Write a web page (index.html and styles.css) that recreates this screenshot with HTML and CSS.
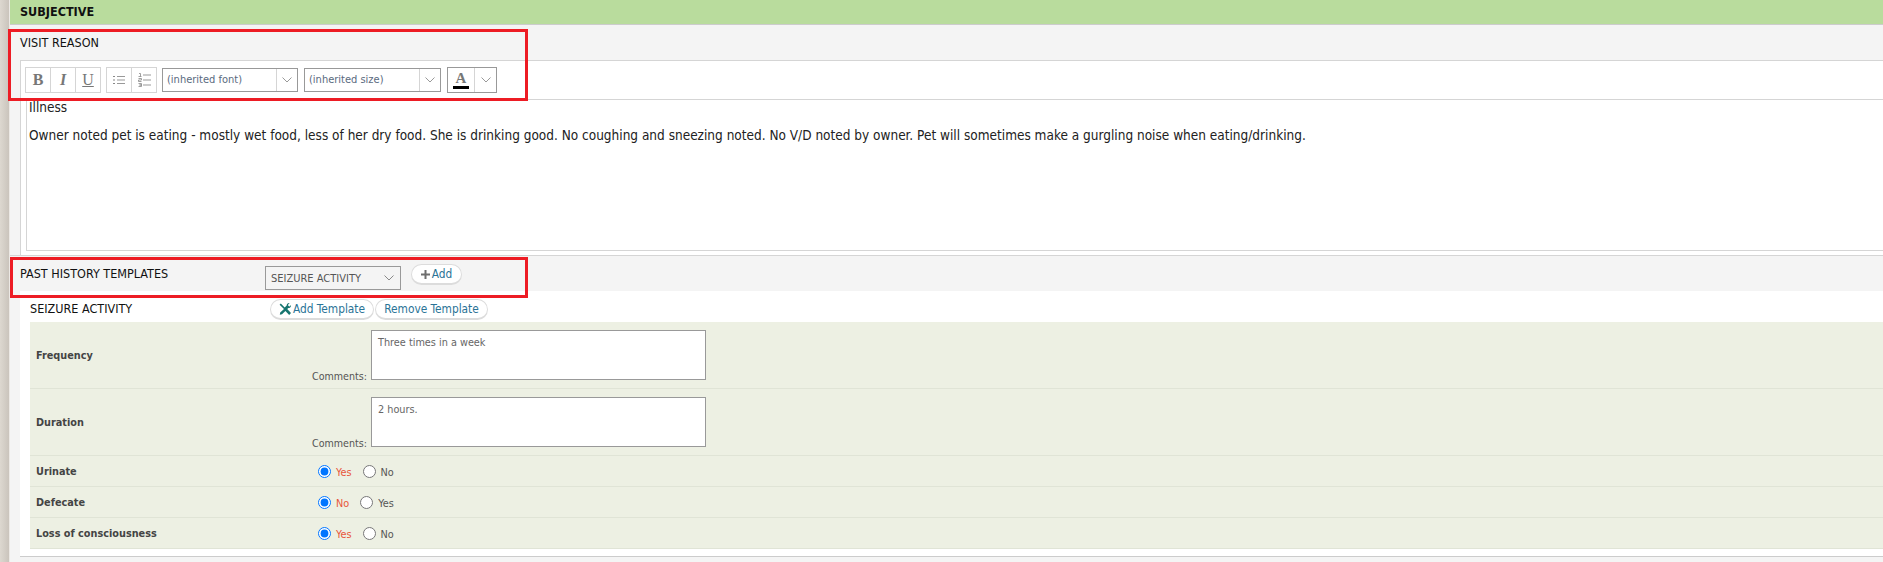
FILE: index.html
```html
<!DOCTYPE html>
<html lang="en">
<head>
<meta charset="utf-8">
<title>Subjective</title>
<link rel="stylesheet" href="styles.css">
</head>
<body>
<div class="page">
  <div class="strip"></div>
  <main class="main">
    <h1 class="section-head">SUBJECTIVE</h1>

    <section class="visit">
      <div class="mark mark-visit"></div>
      <h2 class="visit-title">VISIT REASON</h2>
      <div class="editor">
        <div class="toolbar">
          <div class="btn-group group-format">
            <span class="tool glyph-b">B</span>
            <span class="tool glyph-i">I</span>
            <span class="tool glyph-u">U</span>
          </div>
          <div class="btn-group group-list">
            <span class="tool">
              <svg width="12" height="10" viewBox="0 0 12 10"><path d="M4 1.500h8M4 5h8M4 8.500h8" stroke="#999" fill="none"/><path d="M0 1h2v1H0zM0 4.500h2v1H0zM0 8h2v1H0z" fill="#888"/></svg>
            </span>
            <span class="tool">
              <svg width="13" height="14" viewBox="0 0 13 14"><path d="M5 2h8M5 7h8M5 12h8" stroke="#999" fill="none"/><path d="M1 .5h1.500v3M.5 3.500h3M.5 5.500h3v1.500h-3v1.500h3M.5 10.500h3v1.500h-2 2v1.500h-3" stroke="#888" fill="none" stroke-width=".8"/></svg>
            </span>
          </div>
          <div class="combo combo-font">
            <span class="combo-text">(inherited font)</span>
            <span class="combo-arrow"><svg width="10" height="6" viewBox="0 0 10 6"><path d="M.5.500 5 5 9.500.500" stroke="#999" fill="none"/></svg></span>
          </div>
          <div class="combo combo-size">
            <span class="combo-text">(inherited size)</span>
            <span class="combo-arrow"><svg width="10" height="6" viewBox="0 0 10 6"><path d="M.5.500 5 5 9.500.500" stroke="#999" fill="none"/></svg></span>
          </div>
          <div class="color-picker">
            <span class="color-main"><span class="color-a">A</span><span class="color-bar"></span></span>
            <span class="color-arrow"><svg width="10" height="6" viewBox="0 0 10 6"><path d="M.5.500 5 5 9.500.500" stroke="#999" fill="none"/></svg></span>
          </div>
        </div>
        <div class="editor-body">
          <p class="reason">Illness</p>
          <p class="reason">Owner noted pet is eating - mostly wet food, less of her dry food. She is drinking good. No coughing and sneezing noted. No V/D noted by owner. Pet will sometimes make a gurgling noise when eating/drinking.</p>
        </div>
      </div>
    </section>

    <section class="history">
      <div class="mark mark-history"></div>
      <h2 class="history-title">PAST HISTORY TEMPLATES</h2>
      <div class="history-select">
        <span>SEIZURE ACTIVITY</span>
        <svg width="10" height="6" viewBox="0 0 10 6"><path d="M.5.500 5 5 9.500.500" stroke="#888" fill="none"/></svg>
      </div>
      <span class="pill pill-add">
        <svg width="9" height="9" viewBox="0 0 9 9"><path d="M3.500 0h2v3.500H9v2H5.500V9h-2V5.500H0v-2h3.500z" fill="#6e6e6e"/></svg>
        Add
      </span>
    </section>

    <section class="template">
      <div class="template-head">
        <h3 class="template-title">SEIZURE ACTIVITY</h3>
        <span class="pill pill-template">
          <svg width="12" height="12" viewBox="0 0 12 12"><path d="M.6 1.800 1.800.6l3.900 3.900 2-2c0-1.400 1-2.400 2.400-2.400l.4.100-1.500 1.500.4 1.300 1.300.4L12 1.900c.2 1.700-1 3.100-2.600 3.100l-1.200 1.100L12 10l-1.800 1.900-3.800-4-3.400 3.400-2.200.5.400-2.300L5 5.900z" fill="#16756f"/></svg>
          Add Template
        </span>
        <span class="pill pill-remove">Remove Template</span>
      </div>
      <div class="rows">
        <div class="row row-text">
          <strong class="row-label">Frequency</strong>
          <span class="comments">Comments:</span>
          <div class="text-box">Three times in a week</div>
        </div>
        <div class="row row-text">
          <strong class="row-label">Duration</strong>
          <span class="comments">Comments:</span>
          <div class="text-box">2 hours.</div>
        </div>
        <div class="row row-radio">
          <strong class="row-label">Urinate</strong>
          <div class="choices">
            <label class="choice on"><input type="radio" name="urinate" checked><span>Yes</span></label>
            <label class="choice"><input type="radio" name="urinate"><span>No</span></label>
          </div>
        </div>
        <div class="row row-radio">
          <strong class="row-label">Defecate</strong>
          <div class="choices">
            <label class="choice on"><input type="radio" name="defecate" checked><span>No</span></label>
            <label class="choice"><input type="radio" name="defecate"><span>Yes</span></label>
          </div>
        </div>
        <div class="row row-radio">
          <strong class="row-label">Loss of consciousness</strong>
          <div class="choices">
            <label class="choice on"><input type="radio" name="loss" checked><span>Yes</span></label>
            <label class="choice"><input type="radio" name="loss"><span>No</span></label>
          </div>
        </div>
      </div>
    </section>
  </main>
</div>
</body>
</html>
```

FILE: styles.css
```css
* { box-sizing: border-box; }
html, body { margin: 0; height: 562px; overflow: hidden; background: #f4f4f4; }
body { font-family: "DejaVu Sans", Verdana, sans-serif; font-stretch: condensed; font-size: 11px; color: #222; }
h1, h2, h3, p { margin: 0; font-weight: normal; }

.page { display: flex; height: 562px; }
.strip { flex: 0 0 10px; background: linear-gradient(90deg, #ddd8d0 0, #cac4bc 90%, #ece9e5 90%); }
.main { flex: 1; min-width: 0; }

.section-head { height: 25px; padding: 4px 0 0 10px; background: #b9dc9d; border-bottom: 1px solid #ccc; font-size: 12.500px; line-height: 16px; font-weight: bold; color: #111; }

.visit { position: relative; height: 231px; padding-left: 10px; border-bottom: 1px solid #d5d5d5; }
.visit-title { height: 35px; padding-top: 11px; font-size: 12.500px; line-height: 14px; color: #111; }
.mark { position: absolute; border: 3px solid #ed1c24; pointer-events: none; z-index: 2; }
.mark-visit { left: -2px; top: 4px; width: 520px; height: 72px; }
.mark-history { left: 0; top: 1px; width: 518px; height: 41px; }

.editor { height: 195px; background: #fff; border-top: 1px solid #d5d5d5; border-left: 1px solid #d5d5d5; }
.toolbar { height: 39px; padding: 6px 0 0 4px; display: flex; align-items: flex-start; border-bottom: 1px solid #d5d5d5; }
.btn-group { display: flex; height: 26px; border: 1px solid #d5d5d5; margin-right: 5px; }
.group-format { width: 76px; }
.group-list { width: 51px; }
.tool { flex: 1; display: flex; align-items: center; justify-content: center; border-left: 1px solid #d5d5d5; color: #777; font: bold 16px/1 "Liberation Serif", serif; }
.tool:first-child { border-left: 0; }
.glyph-i { font-style: italic; }
.glyph-u { text-decoration: underline; font-weight: normal; }
.combo { height: 24px; margin: 1px 6px 0 0; display: flex; border: 1px solid #999; }
.combo-font { width: 136px; }
.combo-size { width: 137px; }
.combo-text { flex: 1; padding-left: 4px; font-size: 11px; line-height: 22px; color: #5a6a80; }
.combo-arrow { flex: 0 0 21px; display: flex; align-items: center; justify-content: center; border-left: 1px solid #d5d5d5; }
.color-picker { display: flex; width: 50px; height: 26px; border: 1px solid #999; }
.color-main { flex: 0 0 27px; display: flex; flex-direction: column; align-items: center; border-right: 1px solid #d5d5d5; }
.color-a { font: bold 15px/16px "Liberation Serif", serif; color: #777; margin-top: 2px; }
.color-bar { width: 16px; height: 3px; background: #000; }
.color-arrow { flex: 1; display: flex; align-items: center; justify-content: center; }

.editor-body { height: 151px; margin-left: 5px; padding-left: 2px; border-left: 1px solid #d5d5d5; border-bottom: 1px solid #d5d5d5; }
.reason { font-size: 13.500px; line-height: 15px; color: #222; margin-bottom: 13px; }

.history { position: relative; height: 35px; padding-left: 10px; display: flex; align-items: flex-start; }
.history-title { width: 245px; padding-top: 11px; font-size: 12.500px; line-height: 14px; color: #111; }
.history-select { width: 136px; height: 24px; margin-top: 10px; padding: 0 6px 0 5px; display: flex; align-items: center; justify-content: space-between; border: 1px solid #999; font-size: 11px; color: #555; }
.pill { display: inline-flex; align-items: center; justify-content: center; height: 21px; background: #fff; border: 1px solid #dcdcdc; border-bottom-width: 2px; border-radius: 11px; font-size: 11.800px; color: #2a7396; white-space: nowrap; }
.pill-add { width: 51px; margin: 8px 0 0 10px; gap: 2px; }
.pill-template { width: 104px; gap: 2px; margin-right: 1px; }
.pill-remove { width: 113px; }

.template { margin-left: 10px; height: 266px; padding-left: 10px; background: #fff; border-bottom: 1px solid #ccc; }
.template-head { height: 31px; padding-top: 8px; display: flex; align-items: flex-start; }
.template-title { width: 240px; padding-top: 3px; font-size: 12.500px; line-height: 14px; color: #111; }

.rows { background: #edf0e3; }
.row { display: flex; padding-left: 6px; border-bottom: 1px solid #e0e4d6; }
.row-text { height: 67px; align-items: flex-start; }
.row-radio { height: 31px; align-items: center; }
.row-label { flex: none; padding-top: 2px; font-size: 10.800px; line-height: 14px; color: #444; }
.row-text .row-label { width: 276px; align-self: center; }
.row-radio .row-label { width: 282px; }
.comments { flex: none; width: 59px; margin-top: 47px; font-size: 10.600px; line-height: 14px; color: #555; white-space: nowrap; }
.text-box { width: 335px; height: 50px; margin-top: 8px; padding: 5px 6px; background: #fff; border: 1px solid #999; font-size: 10.800px; line-height: 14px; color: #666; }
.choices { display: flex; gap: 11px; }
.choice { display: flex; align-items: center; gap: 5px; font-size: 10.800px; line-height: 14px; color: #555; }
.choice input { width: 13px; height: 13px; margin: 0; accent-color: #0075ff; }
.choice span { padding-top: 3px; }
.choice.on { color: #e8553a; }
```
